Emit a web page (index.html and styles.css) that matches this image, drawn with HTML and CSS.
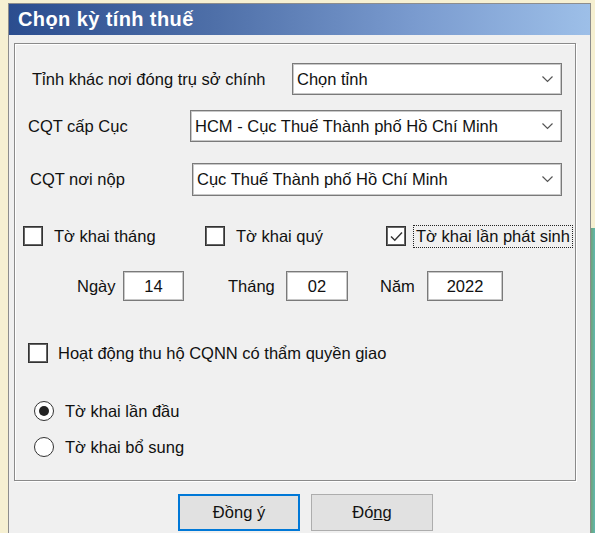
FILE: index.html
```html
<!DOCTYPE html>
<html lang="vi">
<head>
<meta charset="utf-8">
<title>Chọn kỳ tính thuế</title>
<link rel="stylesheet" href="styles.css">
</head>
<body>
<div class="screen">
  <div class="window">
    <div class="titlebar"><span class="title">Chọn kỳ tính thuế</span></div>
    <div class="client">
      <div class="group">
        <div class="row row1">
          <span class="lbl lbl1">Tỉnh khác nơi đóng trụ sở chính</span>
          <div class="combo combo1"><span class="combo-text">Chọn tỉnh</span>
            <svg class="chev" width="11" height="7" viewBox="0 0 11 7"><polyline points="0.5,0.5 5.5,5.5 10.5,0.5" fill="none" stroke="#555" stroke-width="1.2"/></svg>
          </div>
        </div>
        <div class="row row2">
          <span class="lbl lbl2">CQT cấp Cục</span>
          <div class="combo combo2"><span class="combo-text">HCM - Cục Thuế Thành phố Hồ Chí Minh</span>
            <svg class="chev" width="11" height="7" viewBox="0 0 11 7"><polyline points="0.5,0.5 5.5,5.5 10.5,0.5" fill="none" stroke="#555" stroke-width="1.2"/></svg>
          </div>
        </div>
        <div class="row row3">
          <span class="lbl lbl3">CQT nơi nộp</span>
          <div class="combo combo3"><span class="combo-text">Cục Thuế Thành phố Hồ Chí Minh</span>
            <svg class="chev" width="11" height="7" viewBox="0 0 11 7"><polyline points="0.5,0.5 5.5,5.5 10.5,0.5" fill="none" stroke="#555" stroke-width="1.2"/></svg>
          </div>
        </div>
        <div class="checks">
          <label class="chk"><span class="box"></span><span>Tờ khai tháng</span></label>
          <label class="chk"><span class="box"></span><span>Tờ khai quý</span></label>
          <label class="chk"><span class="box"><svg width="15" height="15" viewBox="0 0 15 15"><polyline points="2,7.5 5.8,11.3 13,3.5" fill="none" stroke="#333" stroke-width="1.4"/></svg></span><span class="focus">Tờ khai lần phát sinh</span></label>
        </div>
        <div class="dates">
          <span class="dlbl d-ngay">Ngày</span><span class="field f-ngay">14</span>
          <span class="dlbl d-thang">Tháng</span><span class="field f-thang">02</span>
          <span class="dlbl d-nam">Năm</span><span class="field f-nam">2022</span>
        </div>
        <label class="chk chk-thuho"><span class="box"></span><span>Hoạt động thu hộ CQNN có thẩm quyền giao</span></label>
        <div class="radios">
          <label class="rad"><span class="circle on"></span><span>Tờ khai lần đầu</span></label>
          <label class="rad"><span class="circle"></span><span>Tờ khai bổ sung</span></label>
        </div>
      </div>
      <div class="buttons">
        <button class="btn btn-default">Đồn<u>g</u> ý</button>
        <button class="btn">Đó<u>n</u>g</button>
      </div>
    </div>
  </div>
  <div class="edge"><div class="edge-top"></div><div class="edge-bottom"></div></div>
</div>
</body>
</html>
```
FILE: styles.css
```css
* { box-sizing: border-box; }
html, body { margin: 0; padding: 0; }
body {
  background: #f6f0d2;
  font-family: "Liberation Sans", Arial, sans-serif;
  font-size: 16.5px;
  color: #111;
  width: 595px;
  height: 533px;
  overflow: hidden;
}
.screen { display: flex; padding-left: 8px; height: 533px; }
.window {
  width: 583px;
  margin-top: 3px;
  border: 1px solid #8d8d8d;
  border-bottom: none;
  display: flex;
  flex-direction: column;
  background: #f0f0f0;
}
.titlebar {
  height: 31px;
  background: linear-gradient(to right, #2b4d8f 0%, #4e6fa8 35%, #7a9bcf 70%, #9dbfe8 100%);
  display: flex;
  align-items: center;
  padding-left: 9px;
}
.title {
  color: #fff;
  font-family: "Liberation Sans", Arial, sans-serif;
  font-weight: bold;
  font-size: 20px;
  letter-spacing: 0.4px;
}
.client {
  flex: 1;
  padding: 8px 14px 0 5px;
  background: #f0f0f0;
}
.group {
  height: 438px;
  border: 1px solid #8a8a8a;
  box-shadow: inset 1px 1px 0 #fff, 1px 1px 0 #fff;
}
.row { display: flex; align-items: center; padding-right: 13px; white-space: nowrap; }
.row1 { margin-top: 19px; }
.row2 { margin-top: 15px; }
.row3 { margin-top: 21px; }
.lbl1 { padding-left: 17px; }
.lbl2 { padding-left: 13px; }
.lbl3 { padding-left: 15px; }
.combo {
  margin-left: auto;
  height: 32px;
  background: #fff;
  border: 1px solid #7a7a7a;
  box-shadow: inset 0 0 0 1px #c8c8c8;
  display: flex;
  align-items: center;
  padding: 0 8px 0 4px;
}
.combo1 { width: 270px; }
.combo2 { width: 372px; }
.combo3 { width: 370px; height: 33px; }
.combo-text { flex: 1; white-space: nowrap; }
.chev { flex: none; }

.checks {
  display: grid;
  grid-template-columns: 182px 181px auto;
  padding-left: 8px;
  margin-top: 30px;
  white-space: nowrap;
}
.chk { display: flex; align-items: center; white-space: nowrap; }
.box {
  width: 20px; height: 20px;
  border: 1px solid #333;
  box-shadow: inset 0 0 0 1px #666;
  background: #fff;
  flex: none;
  margin-right: 11px;
  display: flex; align-items: center; justify-content: center;
}
.focus { outline: 1px dotted #222; outline-offset: 1px; padding: 0 1px; margin-left: -2px; }

.dates { display: flex; align-items: center; margin-top: 25px; }
.dlbl { white-space: nowrap; }
.field {
  height: 30px;
  background: #fff;
  border: 1px solid #7a7a7a;
  box-shadow: inset 0 0 0 1px #c8c8c8;
  display: flex; align-items: center; justify-content: center;
}
.d-ngay { margin-left: 62px; width: 46px; }
.f-ngay { width: 61px; }
.d-thang { margin-left: 44px; width: 58px; }
.f-thang { width: 62px; }
.d-nam { margin-left: 32px; width: 47px; }
.f-nam { width: 76px; }

.chk-thuho { margin-top: 42px; padding-left: 13px; }
.chk-thuho .box { margin-right: 10px; }

.radios { display: flex; flex-direction: column; gap: 16px; margin-top: 38px; padding-left: 19px; }
.rad { display: flex; align-items: center; }
.circle {
  width: 20px; height: 20px;
  border-radius: 50%;
  border: 1.5px solid #333;
  background: #fff;
  margin-right: 11px;
  flex: none;
  display: flex; align-items: center; justify-content: center;
}
.circle.on::after {
  content: "";
  width: 10px; height: 10px;
  border-radius: 50%;
  background: #222;
}

.buttons {
  display: flex;
  gap: 11px;
  padding-left: 164px;
  margin-top: 13px;
}
.btn {
  width: 122px;
  height: 37px;
  background: #e1e1e1;
  border: 1px solid #adadad;
  font-family: "Liberation Sans", Arial, sans-serif;
  font-size: 16.5px;
  color: #111;
  padding: 0;
}
.btn-default { border: 2px solid #0078d7; }

.edge { width: 4px; display: flex; flex-direction: column; }
.edge-top { height: 228px; background: #f6f0d2; }
.edge-bottom { flex: 1; background: linear-gradient(to right, #6fa37a, #5fb8b0); }
```
